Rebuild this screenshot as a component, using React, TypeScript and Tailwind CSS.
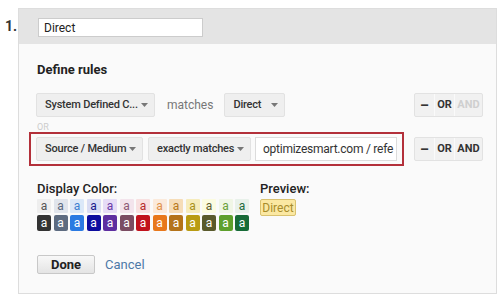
import React from "react"

const lightSwatches = [
  ["#eeeeee", "#555555"],
  ["#e1e5ec", "#5c6a80"],
  ["#dbe8f8", "#3d7fd0"],
  ["#d9dcf3", "#1a1a8c"],
  ["#e6dcf6", "#6a3aa8"],
  ["#f3e4ec", "#8c5a74"],
  ["#f8e0e0", "#b52a2a"],
  ["#fbeadb", "#e0904a"],
  ["#f6ddb8", "#b8781a"],
  ["#f6ecbc", "#a8901a"],
  ["#fbfbe0", "#5e5e2e"],
  ["#f0f6e6", "#6aa03a"],
  ["#e8f1ea", "#236a3a"],
]

const darkSwatches = [
  "#333333",
  "#5d6b80",
  "#2a7ae2",
  "#0c0c9e",
  "#5e2ea0",
  "#7b4c62",
  "#c1121c",
  "#e8781c",
  "#b4731a",
  "#b99b12",
  "#5a5a2c",
  "#5ea02c",
  "#176b37",
]

function Caret() {
  return (
    <svg width="7" height="4" viewBox="0 0 7 4" className="shrink-0">
      <path d="M0 0h7L3.5 4z" fill="#777" />
    </svg>
  )
}

function Select({ label, width }: { label: string; width: string }) {
  return (
    <div
      className={`${width} h-[24px] flex items-center justify-between pl-[8px] pr-[6px] bg-[#efefef] border border-[#e2e2e2] rounded-[2px] text-[11px] font-medium tracking-[-0.2px] text-[#333] whitespace-nowrap`}
    >
      <span>{label}</span>
      <Caret />
    </div>
  )
}

function OpGroup({ andEnabled }: { andEnabled: boolean }) {
  return (
    <div className="flex h-[24px] border border-[#e2e2e2] bg-[#f1f1f1] rounded-[2px] text-[11px] font-bold text-[#333]">
      <div className="w-[20px] flex items-center justify-center border-r border-[#fafafa] text-[14px]">–</div>
      <div className="w-[20px] flex items-center justify-center border-r border-[#fafafa]">OR</div>
      <div className={`w-[27px] flex items-center justify-center ${andEnabled ? "text-[#333]" : "text-[#cfcfcf]"}`}>AND</div>
    </div>
  )
}

export default function App() {
  return (
    <div className="w-[500px] h-[299px] bg-white flex font-['Roboto',sans-serif] overflow-hidden">
      <div className="w-[18px] pl-[5px] pt-[16px] text-[14px] font-bold text-[#333]">1.</div>

      <div className="mt-[8px] w-[479px] h-[286px] border border-[#dddddd] flex flex-col">
        {/* header */}
        <div className="h-[35px] bg-[#e4e4e4] pl-[19px] pt-[9px]">
          <div className="w-[165px] h-[19px] bg-white border border-[#cccccc] flex items-center pl-[5px] text-[12px] text-[#222]">
            Direct
          </div>
        </div>

        {/* body */}
        <div className="flex-1 bg-[#fafafa] pt-[18px] pl-[10px]">
          <div className="pl-[8px] h-[16px] leading-[16px] text-[13px] font-bold text-[#222]">Define rules</div>

          {/* rule 1 */}
          <div className="mt-[10px] flex items-center">
            <div className="w-[375px] border-2 border-transparent px-[5px] py-[3px] flex items-center">
              <Select label="System Defined C..." width="w-[119px]" />
              <span className="ml-[12px] text-[12px] text-[#777]">matches</span>
              <div className="ml-[11px]">
                <Select label="Direct" width="w-[61px]" />
              </div>
            </div>
            <div className="ml-[10px]">
              <OpGroup andEnabled={false} />
            </div>
          </div>

          <div className="pl-[8px] h-[10px] leading-[10px] text-[9px] text-[#cccccc]">OR</div>

          {/* rule 2 */}
          <div className="flex items-center">
            <div className="w-[375px] border-2 border-[#b3303a] px-[5px] py-[3px] flex items-center">
              <Select label="Source / Medium" width="w-[107px]" />
              <div className="ml-[5px]">
                <Select label="exactly matches" width="w-[103px]" />
              </div>
              <div className="ml-[4px] w-[142px] h-[24px] bg-white border border-[#dcdcdc] flex items-center pl-[7px] text-[12px] tracking-[-0.25px] text-[#333] whitespace-nowrap">
                optimizesmart.com / refe
              </div>
            </div>
            <div className="ml-[10px]">
              <OpGroup andEnabled />
            </div>
          </div>

          {/* colours & preview */}
          <div className="mt-[15px] pl-[8px] flex">
            <div>
              <div className="h-[16px] leading-[16px] text-[13px] font-medium text-[#222]">Display Color:</div>
              <div className="mt-[2px] flex gap-x-[2.5px]">
                {lightSwatches.map(([bg, fg], i) => (
                  <div
                    key={i}
                    className="w-[14px] h-[14px] flex items-center justify-center text-[12px] leading-none rounded-[1px]"
                    style={{ backgroundColor: bg, color: fg }}
                  >
                    a
                  </div>
                ))}
              </div>
              <div className="mt-[2px] flex gap-x-[2.5px]">
                {darkSwatches.map((bg, i) => (
                  <div
                    key={i}
                    className="w-[14px] h-[16px] flex items-center justify-center text-[12px] leading-none text-white rounded-[2px]"
                    style={{ backgroundColor: bg }}
                  >
                    a
                  </div>
                ))}
              </div>
            </div>
            <div className="ml-[11px]">
              <div className="h-[16px] leading-[16px] text-[13px] font-medium text-[#222]">Preview:</div>
              <div className="mt-[2px] w-[36px] h-[17px] flex items-center justify-center bg-[#fbe8a2] border border-[#d9c270] rounded-[2px] text-[12px] text-[#a88c2a]">
                Direct
              </div>
            </div>
          </div>

          {/* actions */}
          <div className="mt-[24px] pl-[8px] flex items-center">
            <div className="w-[58px] h-[19px] flex items-center justify-center bg-gradient-to-b from-[#f8f8f8] to-[#e4e4e4] border border-[#c8c8c8] rounded-[2px] text-[13px] font-bold text-[#222]">
              Done
            </div>
            <span className="ml-[10px] text-[13px] text-[#4d79a8]">Cancel</span>
          </div>
        </div>
      </div>
    </div>
  )
}
